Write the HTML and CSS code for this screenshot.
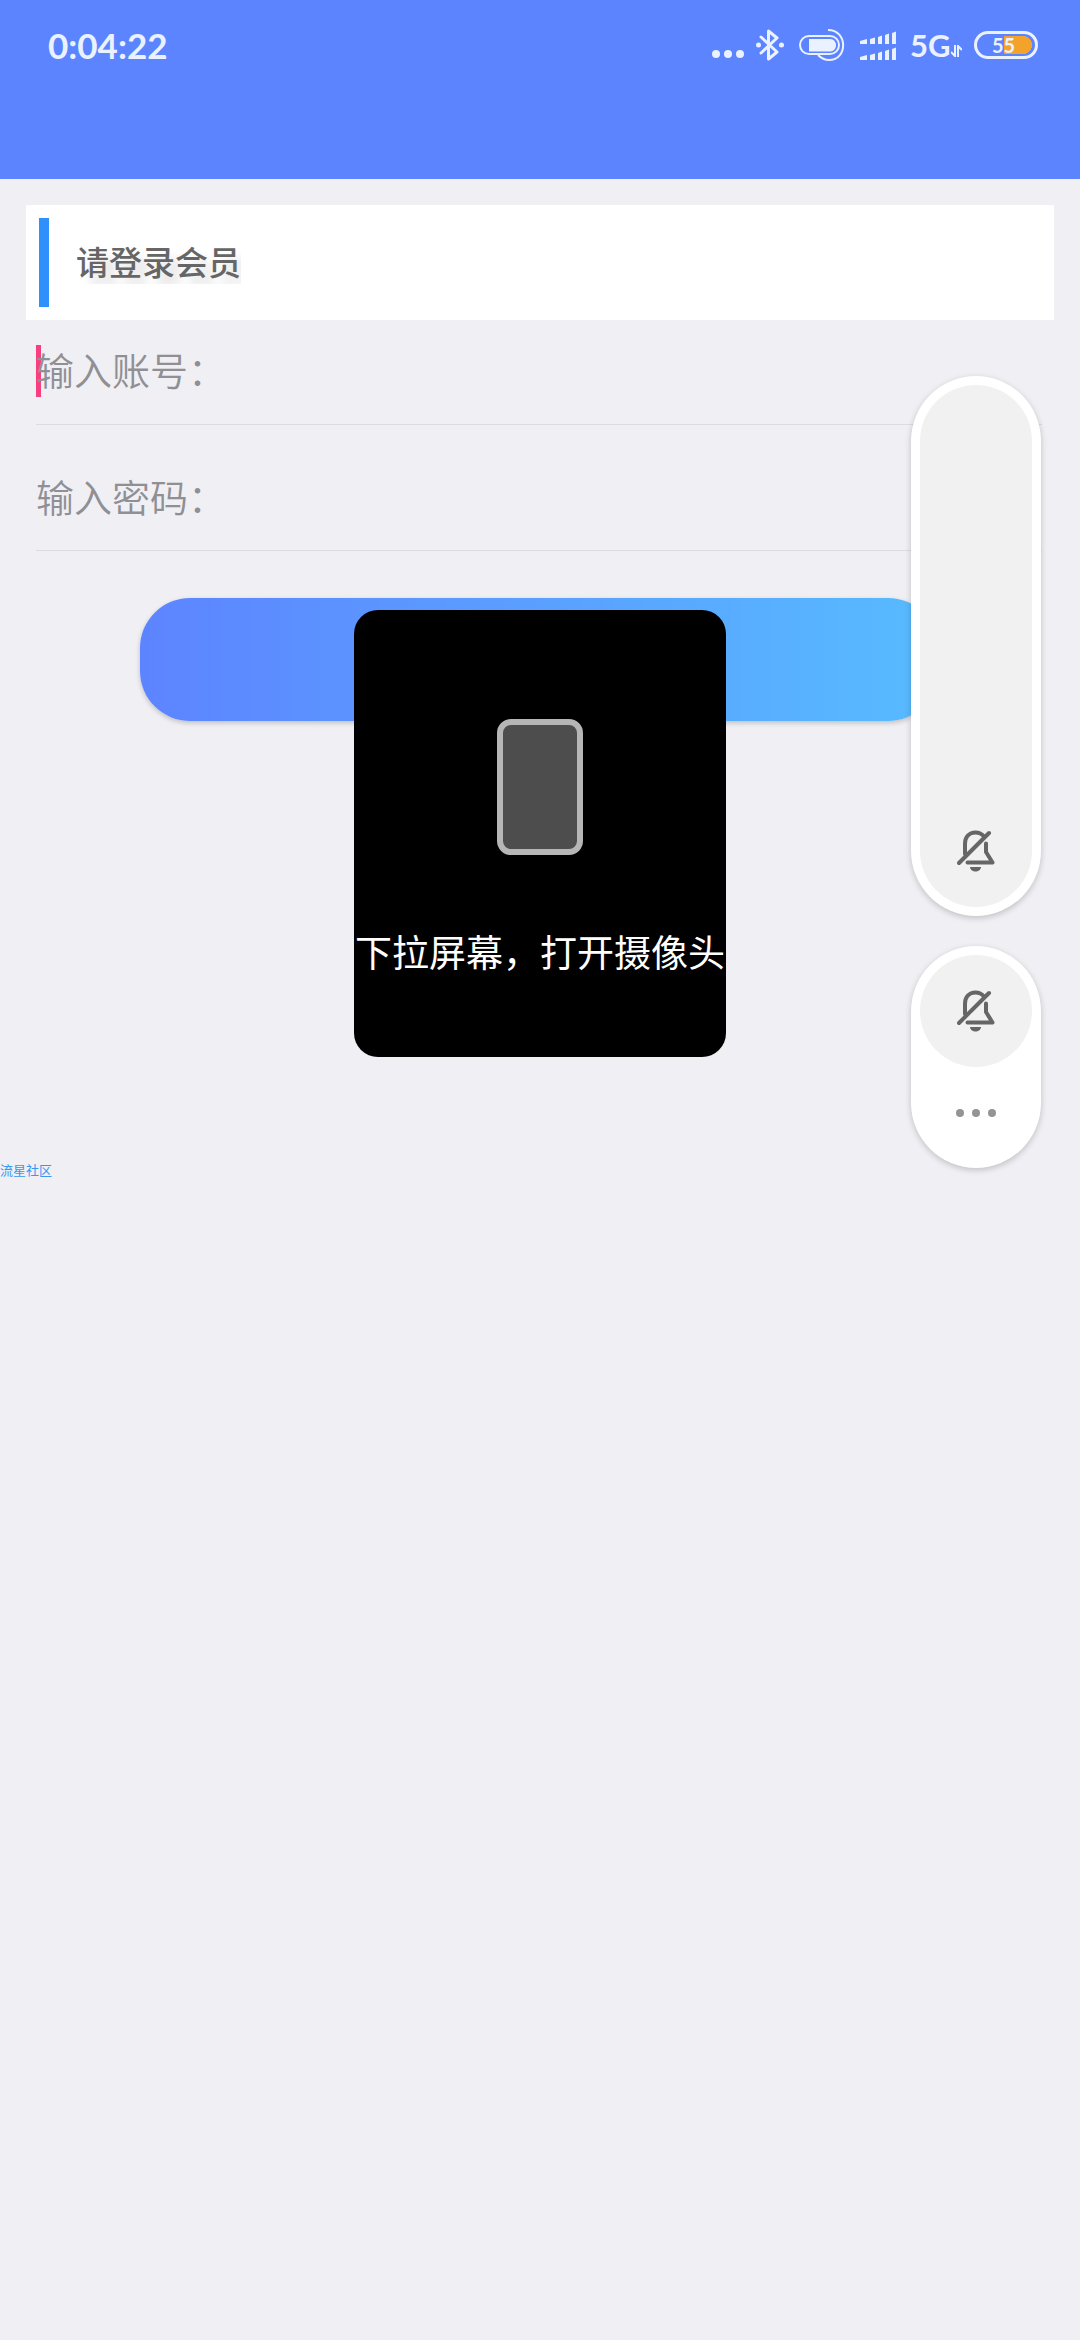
FILE: index.html
```html
<!DOCTYPE html>
<html lang="zh-CN">
<head>
<meta charset="utf-8">
<meta name="viewport" content="width=device-width, initial-scale=1">
<title>请登录会员</title>
<link rel="stylesheet" href="styles.css">
</head>
<body>
<svg class="symbols" aria-hidden="true">
  <symbol id="bell-off" viewBox="0 0 38 42">
    <path d="M8 24V14C8 7 12 2.500 18.500 2.500C22 2.500 25 4 27 6.500" />
    <path d="M2 33L32 3" />
    <path d="M29 13.500V22L35.500 32.500H10.500" />
    <path class="clapper" d="M13 37H24C23.500 43 13.500 43 13 37Z" />
  </symbol>
</svg>

<header class="topbar">
  <div class="status">
    <span class="clock">0:04:22</span>
    <div class="indicators">
      <svg width="32" height="32" viewBox="0 0 32 32" fill="currentColor"><circle cx="4" cy="25" r="4"/><circle cx="16" cy="25" r="4"/><circle cx="28" cy="25" r="4"/></svg>
      <svg width="30" height="32" viewBox="0 0 30 32" fill="none" stroke="currentColor" stroke-width="3"><path d="M5 8L21 23L12.500 30V2L21 9L5 24" stroke-linejoin="round" stroke-linecap="round"/><circle cx="2.500" cy="16" r="2.500" fill="currentColor" stroke="none"/><circle cx="25.500" cy="16" r="2.500" fill="currentColor" stroke="none"/></svg>
      <svg width="48" height="32" viewBox="0 0 48 32" fill="none" stroke="currentColor"><rect x="2" y="7" width="39" height="18" rx="9" stroke-width="2"/><path d="M11 10H32C40 10 40 22.500 32 22.500H11Z" fill="currentColor" stroke="none"/><path d="M30 1C50 1 50 31 31 31C26 31 23 29 20 26" stroke-width="2"/></svg>
      <svg width="40" height="32" viewBox="0 0 40 32" fill="currentColor"><path d="M2 15V12L9 10V15ZM12 15V10L17 8.500V15ZM20 15V8L24 6.500V15ZM27 15V6L31 4.500V15ZM34 15V4L38 2.500V15ZM2 31V28L9 26V31ZM12 31V26L17 24.500V31ZM20 31V24L24 22.500V31ZM27 31V22L31 20.500V31ZM34 31V20L38 18.500V31Z"/></svg>
      <span class="network">5G<svg width="11" height="12" viewBox="0 0 11 12" fill="none" stroke="currentColor" stroke-width="2"><path d="M4 0V11L0 7M7 12V1L11 5"/></svg></span>
      <span class="battery">55</span>
    </div>
  </div>
</header>

<main class="page">
  <section class="heading"><h1><span>请登录会员</span></h1></section>
  <form class="login">
    <label class="field active"><input type="text" aria-label="输入账号" placeholder="输入账号："></label>
    <label class="field"><input type="password" aria-label="输入密码" placeholder="输入密码："></label>
    <button class="submit" type="submit" aria-label="登录"></button>
  </form>
  <a class="community" href="#">流星社区</a>
</main>

<div class="camera-tip" role="dialog">
  <span class="phone"></span>
  <p>下拉屏幕，打开摄像头</p>
</div>

<aside class="volume">
  <div class="slider">
    <input type="range" min="0" max="100" value="0" aria-label="音量">
    <svg class="bell" width="38" height="42"><use href="#bell-off"/></svg>
  </div>
  <div class="controls">
    <button class="mute" type="button" aria-label="静音"><svg class="bell" width="38" height="42"><use href="#bell-off"/></svg></button>
    <button class="more" type="button" aria-label="更多"><svg width="40" height="8" viewBox="0 0 40 8" fill="currentColor"><circle cx="4" cy="4" r="4"/><circle cx="20" cy="4" r="4"/><circle cx="36" cy="4" r="4"/></svg></button>
  </div>
</aside>
</body>
</html>
```
FILE: styles.css
```css
* {
  box-sizing: border-box;
}

body {
  margin: 0;
  min-height: 100vh;
  position: relative;
  background: #efeff4;
  font-family: "Noto Sans CJK SC", sans-serif;
}

button,
input {
  margin: 0;
  padding: 0;
  border: 0;
  background: none;
  font: inherit;
}

.symbols {
  position: absolute;
  width: 0;
  height: 0;
}

.topbar {
  height: 179px;
  background: #5d84ff;
  color: #ebf2ff;
  font-family: Lato, sans-serif;
}

.status {
  height: 90px;
  padding: 0 42px 0 48px;
  display: flex;
  align-items: center;
  justify-content: space-between;
}

.clock {
  font-size: 35px;
  font-weight: 700;
}

.indicators {
  display: flex;
  align-items: center;
  gap: 12px;
}

.network {
  width: 52px;
  display: flex;
  align-items: baseline;
  justify-content: space-between;
  font-size: 31px;
  font-weight: 700;
}

.battery {
  width: 64px;
  height: 28px;
  border: 3px solid currentColor;
  border-radius: 14px;
  display: flex;
  align-items: center;
  padding-left: 15px;
  background: radial-gradient(circle at 0 50%, #f3a32b 9px, transparent 9px) right 3px center / 9px 18px no-repeat,
    linear-gradient(#f3a32b, #f3a32b) right 12px center / 19px 18px no-repeat;
  font-size: 20px;
  font-weight: 700;
}

.page {
  padding: 26px;
}

.heading {
  background: #fff;
  padding: 13px;
}

.heading h1 {
  margin: 0;
  height: 89px;
  padding: 0 0 4px 27px;
  border-left: 10px solid #2f90fb;
  display: flex;
  align-items: center;
  font-size: 33px;
  line-height: 46px;
  font-weight: 500;
  color: #666;
}

.heading span {
  overflow: hidden;
  text-shadow: 10px 10px 10px rgba(0, 0, 0, 0.12);
}

.login {
  padding: 0 12px 0 10px;
}

.field {
  display: block;
  position: relative;
  height: 126px;
  border-bottom: 1px solid #dcdce1;
}

.field.active {
  height: 105px;
}

.field input {
  display: block;
  width: 100%;
  height: 100%;
  padding-top: 16px;
  outline: 0;
  font-size: 38px;
  font-weight: 350;
  color: #333;
}

.field.active input {
  padding: 0 0 8px;
}

.field input::placeholder {
  color: #8f8f94;
  opacity: 1;
}

.field.active::before {
  content: "";
  position: absolute;
  left: 0;
  top: 25px;
  width: 5px;
  height: 52px;
  background: #f73e7e;
  z-index: -1;
}

.submit {
  display: block;
  width: calc(100% - 208px);
  height: 123px;
  margin: 47px auto 0;
  border-radius: 50px;
  background: linear-gradient(90deg, #5d84ff, #57bbff);
  box-shadow: 0 2px 5px rgba(0, 0, 0, 0.2);
}

.community {
  display: block;
  width: max-content;
  margin: 439px 0 0 -26px;
  font-size: 13px;
  line-height: 20px;
  color: #3b96ee;
  text-decoration: none;
}

.camera-tip {
  position: absolute;
  top: 610px;
  left: 50%;
  translate: -50% 0;
  width: 372px;
  padding: 109px 0 78px;
  border-radius: 24px;
  background: #000;
  color: #fff;
  display: flex;
  flex-direction: column;
  align-items: center;
  gap: 68px;
}

.camera-tip p {
  margin: 0;
  font-size: 37px;
  line-height: 56px;
  white-space: nowrap;
}

.phone {
  width: 86px;
  height: 136px;
  border: 6px solid #b6b6b6;
  border-radius: 14px;
  background: #4d4d4d;
}

.volume {
  position: absolute;
  top: 376px;
  right: 39px;
  display: flex;
  flex-direction: column;
  gap: 30px;
}

.slider,
.controls {
  width: 130px;
  padding: 9px;
  border-radius: 65px;
  background: #fff;
  box-shadow: 0 2px 6px rgba(0, 0, 0, 0.2);
}

.slider {
  position: relative;
}

.slider input {
  display: block;
  appearance: none;
  writing-mode: vertical-lr;
  direction: rtl;
  width: 112px;
  height: 522px;
  border-radius: 56px;
  background: #f1f1f1;
}

.slider input::-webkit-slider-thumb {
  appearance: none;
  width: 0;
  height: 0;
}

.slider .bell {
  position: absolute;
  left: 46px;
  bottom: 44px;
}

.bell {
  fill: none;
  stroke: #666;
  stroke-width: 4;
  stroke-linecap: round;
  stroke-linejoin: round;
}

.clapper {
  fill: #666;
  stroke: none;
}

.mute,
.more {
  display: flex;
  align-items: center;
  justify-content: center;
  width: 112px;
  height: 112px;
  border-radius: 56px;
}

.mute {
  background: #f1f1f1;
}

.more {
  height: 92px;
  color: #949494;
}
```
